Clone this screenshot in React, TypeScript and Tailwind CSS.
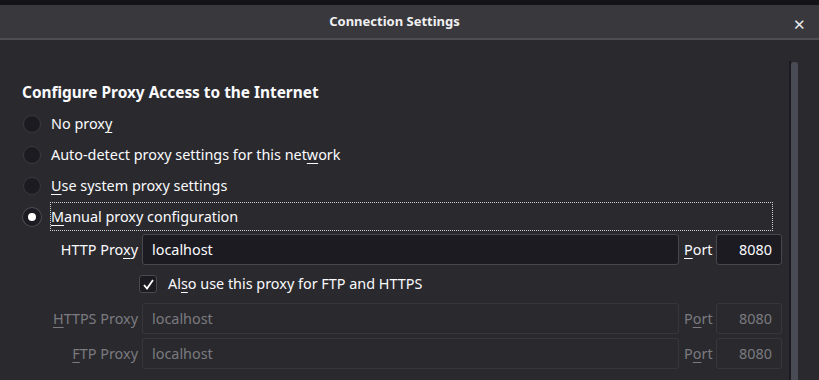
import React from "react";

const U: React.FC<{ children: React.ReactNode }> = ({ children }) => (
  <span className="underline underline-offset-[3px] decoration-1">{children}</span>
);

const Radio: React.FC<{ checked?: boolean; children: React.ReactNode; focused?: boolean }> = ({
  checked,
  children,
  focused,
}) => (
  <div className="flex items-center h-[31px]">
    <div className="ml-[1px] w-[18px] shrink-0">
      {checked ? (
        <div className="w-[18px] h-[18px] rounded-full bg-white border-[5px] border-[#1c1b22] ring-1 ring-[#4a4950]" />
      ) : (
        <div className="w-[18px] h-[18px] rounded-full bg-[#1c1b22] border border-[#3a3940]" />
      )}
    </div>
    <div
      className={
        focused
          ? "ml-[9px] flex-1 mr-[16px] h-[29px] flex items-center border border-dotted border-[#d0d0d0]"
          : "ml-[10px] flex items-center"
      }
    >
      {children}
    </div>
  </div>
);

const ProxyRow: React.FC<{ label: React.ReactNode; disabled?: boolean }> = ({ label, disabled }) => {
  const txt = disabled ? "text-[#7b7a80]" : "text-[#fbfbfe]";
  return (
    <div className="flex items-center h-[31px]">
      <div className={`w-[138px] text-right whitespace-nowrap ${txt}`}>{label}</div>
      <div
        className={`ml-[4px] w-[537px] h-full rounded-[3px] border flex items-center pl-[9px] ${
          disabled ? "border-[#37363c] bg-transparent text-[#7b7a80]" : "border-[#48474d] bg-[#1c1b22] text-[#fbfbfe]"
        }`}
      >
        localhost
      </div>
      <div className={`ml-[5px] w-[32px] ${txt}`}>
        {disabled ? (
          <>
            P<U>o</U>rt
          </>
        ) : (
          <>
            <U>P</U>ort
          </>
        )}
      </div>
      <div
        className={`w-[66px] h-full rounded-[3px] border flex items-center justify-end pr-[9px] ${
          disabled ? "border-[#37363c] text-[#7b7a80]" : "border-[#48474d] bg-[#1c1b22] text-[#fbfbfe]"
        }`}
      >
        8080
      </div>
    </div>
  );
};

export default function App() {
  return (
    <div
      className="w-[819px] h-[380px] overflow-hidden bg-[#2a2a2e] flex flex-col text-[14.4px] text-[#fbfbfe]"
      style={{ fontFamily: '"Noto Sans", "Open Sans", sans-serif' }}
    >
      <div className="h-[5px] bg-[#141417] shrink-0" />
      <div className="h-[35px] shrink-0 bg-[#38383d] border-b-2 border-[#4e4d53] flex items-center relative pr-[30px]">
        <div className="flex-1 text-center font-bold text-[13px] text-[#f0f0f2] pt-[1px]">
          Connection Settings
        </div>
        <div className="absolute right-[13px] top-[8px] text-[15px] text-[#e8e8ea]">✕</div>
      </div>
      <div className="flex flex-1 min-h-0">
        <div className="flex-1 pl-[22px] pt-[43px]">
          <div className="font-bold text-[15.4px] leading-[20px] text-[#fbfbfe] mb-[5px]">
            Configure Proxy Access to the Internet
          </div>
          <div>
            <Radio>
              No prox<U>y</U>
            </Radio>
            <Radio>
              Auto-detect proxy settings for this net<U>w</U>ork
            </Radio>
            <Radio>
              <U>U</U>se system proxy settings
            </Radio>
            <Radio checked focused>
              <U>M</U>anual proxy configuration
            </Radio>
          </div>
          <div className="-ml-[22px] mt-[2px] flex flex-col">
            <ProxyRow
              label={
                <>
                  HTTP Pro<U>x</U>y
                </>
              }
            />
            <div className="h-[38px] flex items-center pl-[139px]">
              <div className="w-[18px] h-[18px] rounded-[3px] bg-[#1c1b22] border border-[#4a4950] flex items-center justify-center">
                <svg width="13" height="13" viewBox="0 0 13 13">
                  <path d="M2 7 L5 10.5 L11 2" fill="none" stroke="#ffffff" strokeWidth="1.8" />
                </svg>
              </div>
              <span className="ml-[11px]">
                Al<U>s</U>o use this proxy for FTP and HTTPS
              </span>
            </div>
            <ProxyRow
              disabled
              label={
                <>
                  <U>H</U>TTPS Proxy
                </>
              }
            />
            <div className="h-[4px]" />
            <ProxyRow
              disabled
              label={
                <>
                  <U>F</U>TP Proxy
                </>
              }
            />
          </div>
        </div>
        <div className="w-[30px] shrink-0 pt-[21px] flex">
          <div className="w-[2px] bg-[#1c1b22]" />
          <div className="w-[7px] bg-[#4a4c55] rounded-t-[3px] mt-[1px]" />
        </div>
      </div>
    </div>
  );
}
